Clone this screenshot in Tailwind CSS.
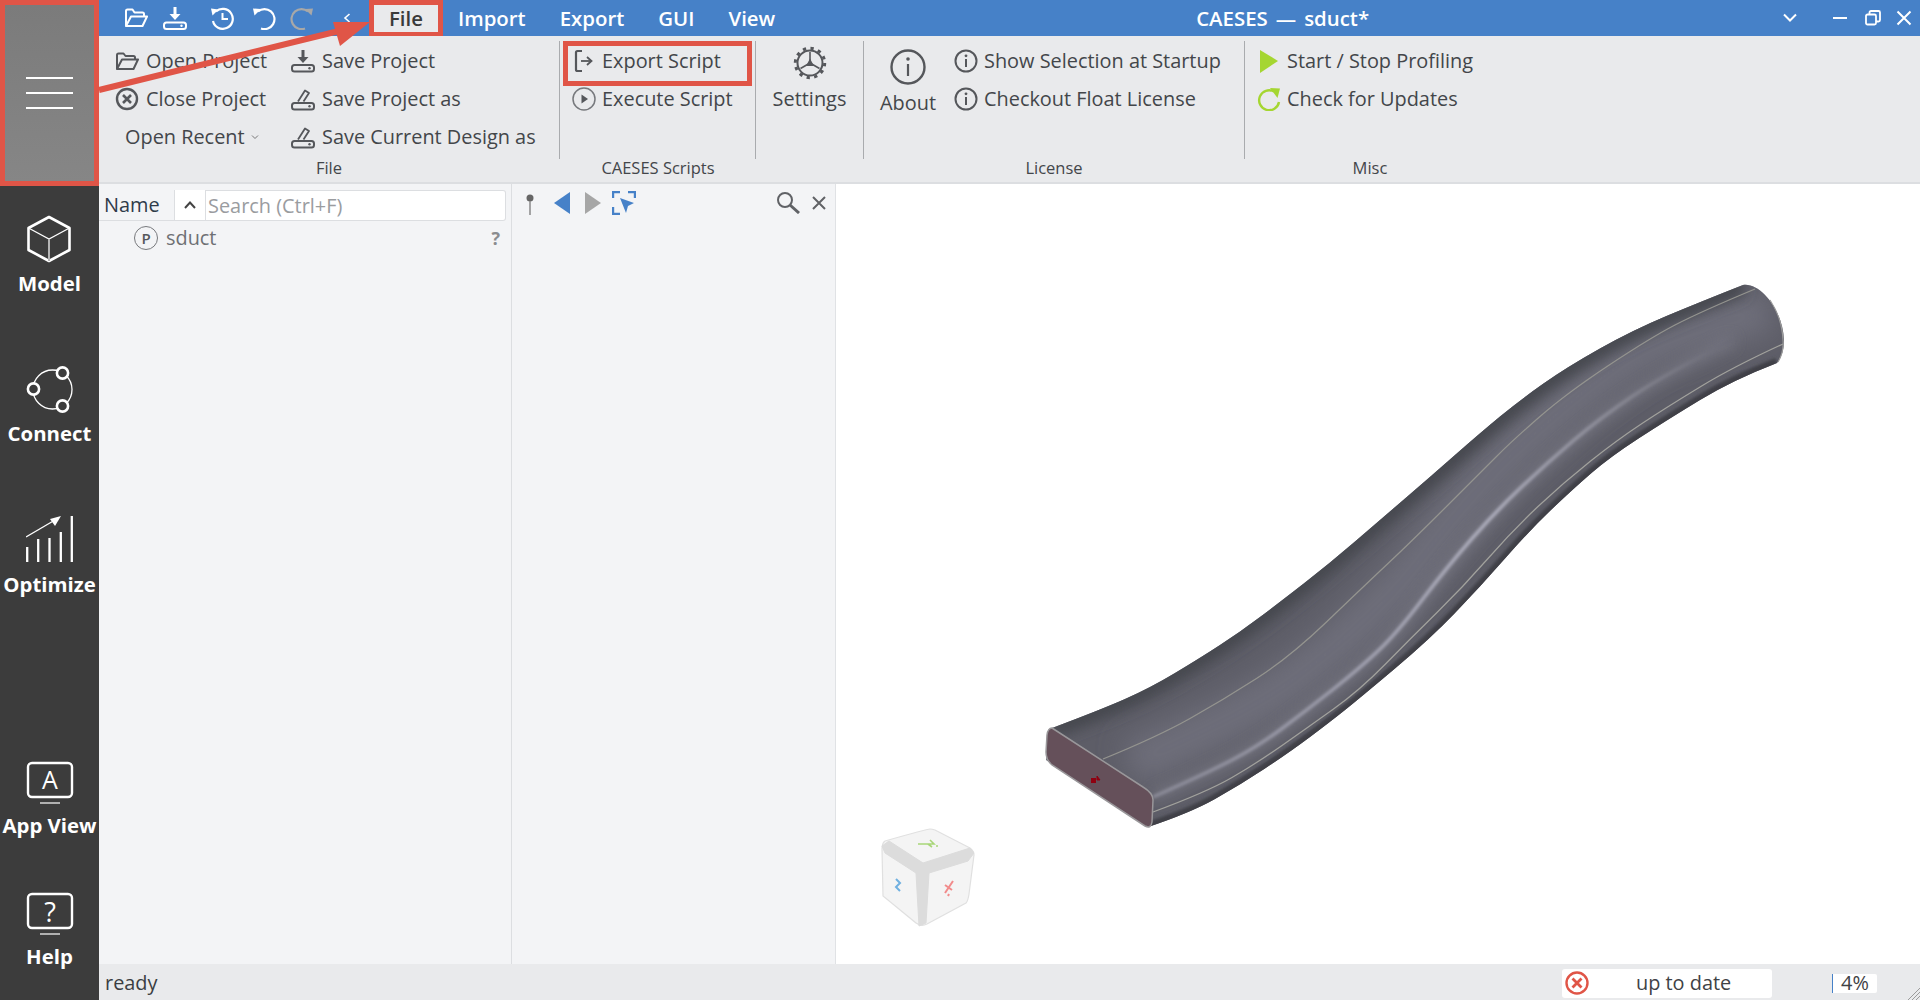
<!DOCTYPE html>
<html lang="en">
<head>
<meta charset="utf-8">
<title>CAESES - sduct*</title>
<script src="https://cdn.jsdelivr.net/npm/@tailwindcss/browser@4"></script>
</head>
<body>
<div class="relative flex h-[1000px] w-[1920px] overflow-hidden bg-white font-['Open_Sans',sans-serif] text-[19.9px] text-[#43464a]">

  <!-- Sidebar -->
  <aside class="flex w-[99px] shrink-0 flex-col bg-[#3c3c3c] text-white">
    <div class="flex h-[186px] shrink-0 flex-col items-center justify-center gap-[13px] border-[5px] border-[#e05547] bg-linear-to-b from-[#7b7b7b] to-[#868686]">
      <span class="h-[2px] w-[47px] bg-white"></span>
      <span class="h-[2px] w-[47px] bg-white"></span>
      <span class="h-[2px] w-[47px] bg-white"></span>
    </div>
    <div class="flex h-[150px] flex-col items-center pt-[29px]">
      <svg class="h-12 w-12" viewBox="0 0 48 48" fill="none" stroke="white">
        <path d="M23 2 43.500 13V35L23 46 2.500 35V13Z" stroke-width="2.600" stroke-linejoin="round"/>
        <path d="M2.500 13 23 24 43.500 13" stroke-width="1.300"/>
        <path d="M23 24V46" stroke-width="2" stroke="#b5b5b5"/>
      </svg>
      <span class="mt-[8px] text-[20.4px] leading-6 font-bold">Model</span>
    </div>
    <div class="flex h-[150px] flex-col items-center pt-[29px]">
      <svg class="h-12 w-12" viewBox="0 0 48 48" fill="none" stroke="white">
        <circle cx="26.500" cy="24.500" r="19.500" stroke-width="1.300"/>
        <circle cx="36.500" cy="8" r="5.600" stroke-width="2.600" fill="#3c3c3c"/>
        <circle cx="7.500" cy="24" r="5.600" stroke-width="2.600" fill="#3c3c3c"/>
        <circle cx="36.500" cy="41" r="5.600" stroke-width="2.600" fill="#3c3c3c"/>
      </svg>
      <span class="mt-[8px] text-[20.4px] leading-6 font-bold">Connect</span>
    </div>
    <div class="flex h-[150px] flex-col items-center pt-[29px]">
      <svg class="h-12 w-12" viewBox="0 0 48 48" fill="none" stroke="white">
        <path d="M0 22 29 5" stroke-width="1.300"/>
        <path d="M35 1 24 4 29 11Z" fill="white" stroke="none"/>
        <path d="M1.200 32V47M12.200 24V47M23.500 23V47M34.800 17V47M45.800 1V47" stroke-width="2.300"/>
      </svg>
      <span class="mt-[9px] text-[20.4px] leading-6 font-bold">Optimize</span>
    </div>
    <div class="mt-auto flex flex-col items-center gap-[53px] pb-[32px]">
      <div class="flex flex-col items-center">
        <svg class="h-12 w-12" viewBox="0 0 48 48" fill="none" stroke="white">
          <rect x="2" y="4" width="44" height="34" rx="4" stroke-width="2.400"/>
          <path d="M14 44H34" stroke="#b0b0b0" stroke-width="2"/>
          <text x="24" y="30" text-anchor="middle" font-family="Open Sans" font-size="25" fill="white" stroke="none">A</text>
        </svg>
        <span class="mt-[6px] text-[20.4px] leading-6 font-bold">App View</span>
      </div>
      <div class="flex flex-col items-center">
        <svg class="h-12 w-12" viewBox="0 0 48 48" fill="none" stroke="white">
          <rect x="2" y="4" width="44" height="34" rx="4" stroke-width="2.400"/>
          <path d="M14 44H34" stroke="#b0b0b0" stroke-width="2"/>
          <text x="24" y="32" text-anchor="middle" font-family="Open Sans" font-size="27" fill="white" stroke="none">?</text>
        </svg>
        <span class="mt-[6px] text-[20.4px] leading-6 font-bold">Help</span>
      </div>
    </div>
  </aside>

  <div class="flex min-w-0 flex-1 flex-col">
    <!-- Title bar -->
    <header class="flex h-9 shrink-0 items-center bg-[#4681c8] pl-[25px] text-white">
      <svg class="h-6 w-6" viewBox="0 0 24 24" fill="none" stroke="white" stroke-width="2" stroke-linejoin="round">
        <path d="M2 20V5A1.500 1.500 0 0 1 3.500 3.500h5l2 3h8A1.500 1.500 0 0 1 20 8v2"/>
        <path d="M2 20h16.500L23 10.500H7L2 20Z"/>
      </svg>
      <svg class="ml-[15px] h-6 w-6" viewBox="0 0 24 24" fill="none" stroke="white">
        <path d="M12 1V8" stroke-width="3"/>
        <path d="M6.500 8H17.500L12 14Z" fill="white" stroke="none"/>
        <rect x="1" y="16.500" width="22" height="6.500" rx="2.500" stroke-width="2"/>
        <circle cx="18.500" cy="19.750" r="1.200" fill="white" stroke="none"/>
      </svg>
      <svg class="ml-[23px] h-6 w-6" viewBox="0 0 24 24" fill="none" stroke="white" stroke-width="2.200">
        <path d="M6 5.500A10 10 0 1 1 3 15"/>
        <path d="M1 2.500 8.500 3.500 2.500 9.500Z" fill="white" stroke="none"/>
        <path d="M12.500 7V13H18" stroke-width="2"/>
      </svg>
      <svg class="ml-[18px] h-6 w-6" viewBox="0 0 24 24" fill="none" stroke="white" stroke-width="2.200">
        <path d="M6 5.500A10 10 0 1 1 9 22.500"/>
        <path d="M1 2.500 9 3 2.500 9.500Z" fill="white" stroke="none"/>
      </svg>
      <svg class="ml-[14px] h-6 w-6" viewBox="0 0 24 24" fill="none" stroke="#a8a8a8" stroke-width="2.200">
        <path d="M18 5.500A10 10 0 1 0 15 22.500"/>
        <path d="M23 2.500 15 3 21.500 9.500Z" fill="#a8a8a8" stroke="none"/>
      </svg>
      <svg class="ml-[29px] h-[10px] w-2" viewBox="0 0 8 10" fill="none" stroke="white" stroke-width="1.600"><path d="M6.500 1 2 5 6.500 9"/></svg>
      <div class="ml-[18px] flex h-[37px] w-[74px] items-center justify-center self-start border-[5px] border-[#e05547] bg-[#e9eaec] text-[20.4px] font-semibold text-[#3a3a3a]">File</div>
      <nav class="ml-[15px] flex gap-[34px] text-[20.4px] font-semibold">
        <span>Import</span>
        <span>Export</span>
        <span>GUI</span>
        <span>View</span>
      </nav>
      <div class="flex flex-1 justify-center gap-[8px] pl-[8px] text-[20.4px] font-semibold"><span>CAESES</span><span>—</span><span>sduct*</span></div>
      <svg class="mr-[34px] h-4 w-4" viewBox="0 0 16 16" fill="none" stroke="white" stroke-width="2"><path d="M2 4.500 8 10.500 14 4.500"/></svg>
      <svg class="mr-[17px] h-4 w-4" viewBox="0 0 16 16" fill="none" stroke="white" stroke-width="2"><path d="M1 8H15"/></svg>
      <svg class="mr-[15px] h-4 w-4" viewBox="0 0 16 16" fill="none" stroke="white" stroke-width="1.800"><rect x="1" y="4.500" width="10" height="10" rx="1.500"/><path d="M4.500 4V2.500A1.500 1.500 0 0 1 6 1h7.500A1.500 1.500 0 0 1 15 2.500V10A1.500 1.500 0 0 1 13.500 11.500H11"/></svg>
      <svg class="mr-[8px] h-4 w-4" viewBox="0 0 16 16" fill="none" stroke="white" stroke-width="2"><path d="M1.500 1.500 14.500 14.500M14.500 1.500 1.500 14.500"/></svg>
    </header>

    <!-- Ribbon -->
    <section class="flex h-[148px] shrink-0 border-b-2 border-[#dcdee1] bg-[#e9eaec]">
      <!-- File -->
      <div class="flex w-[461px] flex-col">
        <div class="mt-[5px] flex h-[118px] border-r border-[#a9abae] pt-px pl-4">
          <div class="w-[176px]">
            <div class="flex h-[38px] items-center gap-[7px]">
              <svg class="h-6 w-6" viewBox="0 0 24 24" fill="none" stroke="#55575b" stroke-width="2" stroke-linejoin="round"><path d="M2 20V6A1.500 1.500 0 0 1 3.500 4.500h5l2 2.500h8A1.500 1.500 0 0 1 20 8.500V10"/><path d="M2 20h16.500L23 10.500H7L2 20Z"/></svg>
              <span>Open Project</span>
            </div>
            <div class="flex h-[38px] items-center gap-[7px]">
              <svg class="h-6 w-6" viewBox="0 0 24 24" fill="none" stroke="#55575b" stroke-width="2.400"><circle cx="12" cy="12" r="10"/><path d="M8 8 16 16M16 8 8 16" stroke-width="2.600"/></svg>
              <span>Close Project</span>
            </div>
            <div class="flex h-[38px] items-center gap-[6px] pl-[10px]">
              <span>Open Recent</span>
              <svg class="h-2 w-2" viewBox="0 0 8 8" fill="none" stroke="#777" stroke-width="1"><path d="M1 2.500 4 5.500 7 2.500"/></svg>
            </div>
          </div>
          <div>
            <div class="flex h-[38px] items-center gap-[7px]">
              <svg class="h-6 w-6" viewBox="0 0 24 24" fill="none" stroke="#55575b"><path d="M12 1V8" stroke-width="3"/><path d="M6.500 8H17.500L12 14Z" fill="#55575b" stroke="none"/><rect x="1" y="16" width="22" height="6.500" rx="2.500" stroke-width="2"/><circle cx="18.500" cy="19.250" r="1.200" fill="#55575b" stroke="none"/></svg>
              <span>Save Project</span>
            </div>
            <div class="flex h-[38px] items-center gap-[7px]">
              <svg class="h-6 w-6" viewBox="0 0 24 24" fill="none" stroke="#55575b"><path d="M7 14.500 14 3.500 18 6 12.500 14.500" stroke-width="1.800" stroke-linejoin="round"/><rect x="1" y="16" width="22" height="6.500" rx="2.500" stroke-width="2"/><circle cx="18.500" cy="19.250" r="1.200" fill="#55575b" stroke="none"/></svg>
              <span>Save Project as</span>
            </div>
            <div class="flex h-[38px] items-center gap-[7px]">
              <svg class="h-6 w-6" viewBox="0 0 24 24" fill="none" stroke="#55575b"><path d="M7 14.500 14 3.500 18 6 12.500 14.500" stroke-width="1.800" stroke-linejoin="round"/><rect x="1" y="16" width="22" height="6.500" rx="2.500" stroke-width="2"/><circle cx="18.500" cy="19.250" r="1.200" fill="#55575b" stroke="none"/></svg>
              <span>Save Current Design as</span>
            </div>
          </div>
        </div>
        <div class="flex h-[18px] items-center justify-center pr-px text-[16.5px]">File</div>
      </div>

      <!-- Scripts -->
      <div class="relative flex w-[196px] flex-col">
        <div class="mt-[5px] h-[118px] border-r border-[#a9abae] pt-px pl-3">
          <div class="flex h-[38px] items-center gap-[6px]">
            <svg class="h-6 w-6" viewBox="0 0 24 24" fill="none" stroke="#55575b" stroke-width="2.200"><path d="M10 2H5.500A1.500 1.500 0 0 0 4 3.500V20.500A1.500 1.500 0 0 0 5.500 22H10"/><path d="M9 12H19" stroke-width="1.800"/><path d="M15 8 19.500 12 15 16" stroke-width="1.800"/></svg>
            <span>Export Script</span>
          </div>
          <div class="flex h-[38px] items-center gap-[6px]">
            <svg class="h-6 w-6" viewBox="0 0 24 24" fill="none" stroke="#77797d" stroke-width="1.500"><circle cx="12" cy="12" r="11"/><path d="M9.500 7.500 16 12 9.500 16.500Z" fill="#55575b" stroke="none"/></svg>
            <span>Execute Script</span>
          </div>
        </div>
        <div class="flex h-[18px] items-center justify-center text-[16.5px]">CAESES Scripts</div>
        <div class="absolute top-[5px] left-[3px] h-[45px] w-[189px] border-[5px] border-[#e05547]"></div>
      </div>

      <!-- Settings -->
      <div class="flex w-[108px] flex-col">
        <div class="mt-[5px] flex h-[118px] flex-col items-center border-r border-[#a9abae] pt-px">
          <div class="flex h-[38px] items-center">
            <svg class="mt-[3px] h-[34px] w-[34px]" viewBox="0 0 34 34" fill="none" stroke="#55575b"><circle cx="17" cy="17" r="12.500" stroke-width="2"/><circle cx="17" cy="17" r="14.700" stroke-width="3" stroke-dasharray="3.300 4.400"/><path d="M17 17V6M17 17 7.500 22.500M17 17 26.500 22.500" stroke-width="1.600"/><path d="M17 12.500 21 20H13Z" fill="#55575b" stroke="none"/></svg>
          </div>
          <div class="flex h-[38px] items-center">Settings</div>
        </div>
      </div>

      <!-- License -->
      <div class="flex w-[381px] flex-col">
        <div class="mt-[5px] flex h-[118px] border-r border-[#a9abae] pl-[14px]">
          <div class="flex w-[60px] flex-col items-center pt-2">
            <svg class="h-9 w-9" viewBox="0 0 36 36" fill="none" stroke="#55575b" stroke-width="2.400"><circle cx="18" cy="18" r="16.500"/><path d="M18 15V27" stroke-width="2.200"/><circle cx="18" cy="10" r="1.800" fill="#55575b" stroke="none"/></svg>
            <span class="mt-[7px] leading-[22px]">About</span>
          </div>
          <div class="ml-[16px] pt-px">
            <div class="flex h-[38px] items-center gap-[6px]">
              <svg class="h-6 w-6" viewBox="0 0 24 24" fill="none" stroke="#55575b" stroke-width="2"><circle cx="12" cy="12" r="10.500"/><path d="M12 10V18" stroke-width="2"/><circle cx="12" cy="6.800" r="1.400" fill="#55575b" stroke="none"/></svg>
              <span>Show Selection at Startup</span>
            </div>
            <div class="flex h-[38px] items-center gap-[6px]">
              <svg class="h-6 w-6" viewBox="0 0 24 24" fill="none" stroke="#55575b" stroke-width="2"><circle cx="12" cy="12" r="10.500"/><path d="M12 10V18" stroke-width="2"/><circle cx="12" cy="6.800" r="1.400" fill="#55575b" stroke="none"/></svg>
              <span>Checkout Float License</span>
            </div>
          </div>
        </div>
        <div class="flex h-[18px] items-center justify-center pr-px text-[16.5px]">License</div>
      </div>

      <!-- Misc -->
      <div class="flex w-[251px] flex-col">
        <div class="mt-[5px] h-[118px] pt-px pl-3">
          <div class="flex h-[38px] items-center gap-[6px]">
            <svg class="h-6 w-6" viewBox="0 0 24 24"><path d="M3 1 21 12 3 24Z" fill="#a5d631"/></svg>
            <span>Start / Stop Profiling</span>
          </div>
          <div class="flex h-[38px] items-center gap-[6px]">
            <svg class="h-6 w-6" viewBox="0 0 24 24" fill="none" stroke="#a5d631" stroke-width="2.400"><path d="M17 4.500A10 10 0 1 0 22 15"/><path d="M13 1 23 1.500 20.500 11Z" fill="#a5d631" stroke="none"/></svg>
            <span>Check for Updates</span>
          </div>
        </div>
        <div class="flex h-[18px] items-center justify-center pr-px text-[16.5px]">Misc</div>
      </div>
    </section>

    <!-- Main -->
    <main class="flex min-h-0 flex-1">
      <div class="flex w-[413px] shrink-0 flex-col border-r border-[#dcdee1] bg-[#f3f4f6]">
        <div class="flex h-[37px] items-end">
          <div class="flex h-[37px] w-[75px] items-center border-b border-[#dcdee1] pt-[5px] pl-[5px] text-[#2f3b4a]">Name</div>
          <div class="flex h-[31px] w-[32px] items-center justify-center border-x border-b border-[#dcdee1] bg-white">
            <svg class="h-3 w-3" viewBox="0 0 12 12" fill="none" stroke="#444" stroke-width="2"><path d="M1 9 6 3.500 11 9"/></svg>
          </div>
          <div class="flex h-[31px] w-[300px] items-center rounded-r-[3px] border border-l-0 border-[#dcdee1] bg-white pl-[2px] text-[#9a9c9f]">Search (Ctrl+F)</div>
        </div>
        <div class="flex h-[34px] items-center pr-[11px] pl-[35px] text-[#6e7074]">
          <div class="flex h-[24px] w-[24px] items-center justify-center rounded-full border-[1.500px] border-[#77797d] text-[15px] leading-none font-semibold text-[#55575b]">P</div>
          <span class="ml-[8px]">sduct</span>
          <span class="ml-auto text-[18px] font-bold text-[#8a8c8f]">?</span>
        </div>
      </div>

      <div class="flex h-full w-[324px] shrink-0 items-start border-r border-[#e0e2e5] bg-[#f3f4f6] pt-[7px] pr-[9px] pl-[13px]">
        <svg class="h-6 w-2.5" viewBox="0 0 10 24" fill="none"><circle cx="5" cy="7" r="3.500" fill="#666"/><path d="M5 10V24" stroke="#888" stroke-width="1.500"/></svg>
        <svg class="ml-[19px] h-6 w-4" viewBox="0 0 16 24"><path d="M16 1V23L0 12Z" fill="#4681c8"/></svg>
        <svg class="ml-[15px] h-6 w-4" viewBox="0 0 16 24"><path d="M0 1V23L16 12Z" fill="#a6a6a6"/></svg>
        <svg class="ml-[11px] h-6 w-6" viewBox="0 0 24 24" fill="none" stroke="#4681c8" stroke-width="2.400"><path d="M1 7V1H8M16 1H23V7M1 16V23H8"/><path d="M8 7 22 12 16 15 14 22Z" fill="#4681c8" stroke="none"/></svg>
        <svg class="mt-px ml-auto h-[22px] w-[24px]" viewBox="0 0 24 22" fill="none" stroke="#606266"><circle cx="9" cy="8" r="7" stroke-width="2"/><path d="M14 13 23 21" stroke-width="3"/></svg>
        <svg class="mt-[5px] ml-[12px] h-[14px] w-[14px]" viewBox="0 0 14 14" fill="none" stroke="#606266" stroke-width="2"><path d="M1 1 13 13M13 1 1 13"/></svg>
      </div>

      <div class="relative min-w-0 flex-1 bg-white">
        <svg class="absolute inset-0 h-full w-full" viewBox="836 184 1084 780" fill="none">
          <defs>
            <filter id="b1" x="-20%" y="-20%" width="140%" height="140%"><feGaussianBlur stdDeviation="14"/></filter>
            <filter id="b2" x="-20%" y="-20%" width="140%" height="140%"><feGaussianBlur stdDeviation="7"/></filter>
            <filter id="b3" x="-20%" y="-20%" width="140%" height="140%"><feGaussianBlur stdDeviation="1.500"/></filter>
            <filter id="b4" x="-20%" y="-20%" width="140%" height="140%"><feGaussianBlur stdDeviation="0.600"/></filter>
            <linearGradient id="hl" gradientUnits="userSpaceOnUse" x1="1153" y1="800" x2="1733" y2="340">
              <stop offset="0" stop-color="#8c8c99"/>
              <stop offset="0.35" stop-color="#a4a4b3"/>
              <stop offset="0.6" stop-color="#b0b0bf"/>
              <stop offset="0.85" stop-color="#84848f"/>
              <stop offset="1" stop-color="#6a6a76"/>
            </linearGradient>
            <clipPath id="duct"><path d="M1052 728Q1100 710 1125 699Q1150 688 1175 673Q1200 658 1220 645Q1240 632 1260 617Q1280 602 1305 582.500Q1330 563 1355 541.500Q1380 520 1405 498.500Q1430 477 1455 455Q1480 433 1500 416.500Q1520 400 1543.500 383.500Q1567 367 1600 348.500Q1633 330 1666.500 316Q1700 302 1743 285C1760 282 1783 310 1784 340Q1784 355 1777 363Q1733 380 1700 400Q1667 420 1638.500 438.500Q1610 457 1591.500 473Q1573 489 1551.500 509.500Q1530 530 1505 558.500Q1480 587 1455 613Q1430 639 1395 668.500Q1360 698 1345 710Q1330 722 1310 737Q1290 752 1265 768.500Q1240 785 1215 799Q1190 813 1148 827L1046 760Z"/></clipPath>
          </defs>
          <g clip-path="url(#duct)">
            <rect x="1040" y="280" width="760" height="560" fill="#5d5d67"/>
            <path d="M1130 765Q1207 730 1232 717Q1257 704 1282 688Q1307 670 1333.500 648Q1360 625 1378.500 607Q1397 590 1422 558Q1447 525 1472 497Q1497 468 1522 445Q1547 422 1573.500 400Q1600 378 1633.500 355Q1667 335 1770 310" stroke="#6e6e7a" stroke-width="45" filter="url(#b1)"/>
            <path d="M1052 728Q1100 710 1125 699Q1150 688 1175 673Q1200 658 1220 645Q1240 632 1260 617Q1280 602 1305 582.500Q1330 563 1355 541.500Q1380 520 1405 498.500Q1430 477 1455 455Q1480 433 1500 416.500Q1520 400 1543.500 383.500Q1567 367 1600 348.500Q1633 330 1666.500 316Q1700 302 1743 285" stroke="#45464e" stroke-width="20" filter="url(#b2)"/>
            <path d="M1148 827Q1190 813 1215 799Q1240 785 1265 768.500Q1290 752 1310 737Q1330 722 1345 710Q1360 698 1395 668.500Q1430 639 1455 613Q1480 587 1505 558.500Q1530 530 1551.500 509.500Q1573 489 1591.500 473Q1610 457 1638.500 438.500Q1667 420 1700 400Q1733 380 1777 363" stroke="#3f4047" stroke-width="10" filter="url(#b3)"/>
            <path d="M1153 797Q1207 773 1232 760Q1257 747 1282 728.500Q1307 710 1333.500 689Q1360 668 1378.500 650.500Q1397 633 1422 600Q1447 567 1472 538.500Q1497 510 1522 486.500Q1547 463 1573.500 440.500Q1600 418 1633.500 395.500Q1667 373 1733 340" stroke="#7a7a86" stroke-width="8" filter="url(#b2)"/>
            <path d="M1153 797Q1207 773 1232 760Q1257 747 1282 728.500Q1307 710 1333.500 689Q1360 668 1378.500 650.500Q1397 633 1422 600Q1447 567 1472 538.500Q1497 510 1522 486.500Q1547 463 1573.500 440.500Q1600 418 1633.500 395.500Q1667 373 1733 340" stroke="url(#hl)" stroke-width="3.500" filter="url(#b3)"/>
            <path d="M1103 759Q1157 737 1190 718.500Q1223 700 1256.500 678.500Q1290 657 1326.500 622Q1363 587 1388 563.500Q1413 540 1446.500 506.500Q1480 473 1496.500 456.500Q1513 440 1540 416.500Q1567 393 1608.500 365.500Q1650 338 1675 325Q1700 312 1755 289" stroke="#94948f" stroke-width="1.200" filter="url(#b4)"/>
            <path d="M1153 812Q1207 792 1232 777.500Q1257 763 1282 745.500Q1307 728 1333.500 709Q1360 690 1385 664.500Q1410 639 1436.500 613Q1463 587 1488 558.500Q1513 530 1538 506.500Q1563 483 1590 461.500Q1617 440 1642 423.500Q1667 407 1700 387Q1733 367 1783 344" stroke="#a2a29d" stroke-width="1.200" filter="url(#b4)"/>
          </g>
          <path d="M1770 300Q1782 318 1783 340Q1784 352 1778 362" stroke="#9a9a9a" stroke-width="1.200"/>
          <path d="M1052 728L1143 787Q1153 793 1153 800L1152 822Q1151 829 1145 826L1052 765Q1046 760 1046 752L1047 735Q1048 728 1052 728Z" fill="#65505a" stroke="#99979a" stroke-width="1.500"/>
          <rect x="1091" y="778" width="5" height="5" fill="#8f0010"/>
          <path d="M1097 776 1100 780H1097Z" fill="#8f0010" stroke="#8f0010"/>

          <!-- Orientation cube -->
          <path d="M930 829Q927 829 885 841Q882 843 882 849L883 896L916 923Q921 927 927 924L966 903Q968 901 969 894L974 855Q974 851 970 848L935 830Q932 829 930 829Z" fill="#f4f4f4" stroke="#e0e0e0" stroke-width="1.200"/>
          <path d="M882 846 889 841 923 863 970 848 974 853 968 861 929 873 929 873 926 923 919 926 916 873 885 853Z" fill="#dcdcdc" stroke="#dcdcdc"/>
          <path d="M918 844H934L930 840M928 844 932 847M936 846H938" stroke="#a8d678" stroke-width="1.600"/>
          <path d="M896 879 900 883 896 887 900 891" stroke="#70b0e0" stroke-width="2"/>
          <path d="M945 893 953 881M945 885 952 890M949 894 948 896" stroke="#f28b8b" stroke-width="2"/>
        </svg>
      </div>
    </main>

    <!-- Status -->
    <footer class="relative flex h-9 shrink-0 items-center bg-[#e9eaec] pt-[2px] pr-[43px] pl-[6px]">
      <span class="text-[#3b3e42]">ready</span>
      <div class="ml-auto flex h-[29px] w-[210px] items-center rounded-[3px] bg-white pl-[3px]">
        <svg class="h-6 w-6" viewBox="0 0 24 24" fill="none" stroke="#e05547" stroke-width="2.400"><circle cx="12" cy="12" r="10.500"/><path d="M7.500 7.500 16.500 16.500M16.500 7.500 7.500 16.500" stroke-width="2.800"/></svg>
        <span class="ml-[47px] text-[#3f4246]">up to date</span>
      </div>
      <div class="ml-[60px] flex h-[19px] w-[45px] items-center justify-center rounded-r-[2px] border-l-[1.500px] border-[#4681c8] bg-white text-[#3f4246]">4%</div>
      <svg class="absolute right-0 bottom-0 h-3 w-3" viewBox="0 0 12 12" stroke="#9b9b9b" stroke-width="1"><path d="M12 0 0 12M12 4 4 12M12 8 8 12"/></svg>
    </footer>
  </div>

  <!-- Annotation arrow -->
  <svg class="pointer-events-none absolute top-0 left-0 h-[186px] w-[400px]" viewBox="0 0 400 186" fill="none">
    <path d="M99 90 343 30" stroke="#e05547" stroke-width="6"/>
    <path d="M370 22 333 22 340 46Z" fill="#e05547"/>
  </svg>
</div>
</body>
</html>
